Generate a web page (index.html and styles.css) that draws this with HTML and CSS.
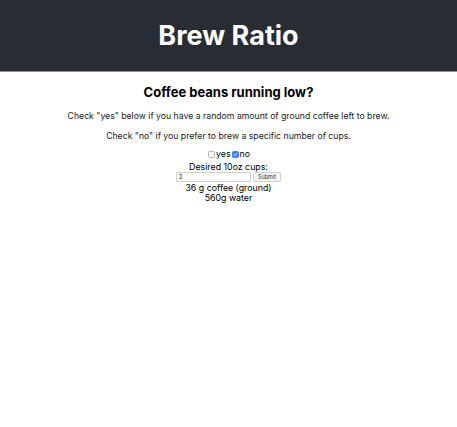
FILE: index.html
```html
<!DOCTYPE html>
<html>
<head>
<meta charset="utf-8">
<link rel="stylesheet" href="styles.css">
</head>
<body>
<div class="app">
  <header class="app-header">
    <h1 class="title">Brew Ratio</h1>
  </header>
  <main class="content">
    <h2 class="question">Coffee beans running low?</h2>
    <p class="note">Check "yes" below if you have a random amount of ground coffee left to brew.</p>
    <p class="note">Check "no" if you prefer to brew a specific number of cups.</p>
    <div class="choices">
      <label class="choice"><input type="checkbox" class="box">yes</label>
      <label class="choice"><input type="checkbox" class="box" checked>no</label>
    </div>
    <div class="line label">Desired 10oz cups:</div>
    <form class="cups-form">
      <input type="text" class="cups-input" value="2">
      <button type="button" class="submit">Submit</button>
    </form>
    <div class="line">36 g coffee (ground)</div>
    <div class="line">560g water</div>
  </main>
</div>
</body>
</html>
```
FILE: styles.css
```css
html, body {
  margin: 0;
  padding: 0;
  background: #ffffff;
}
body {
  font-family: Inter, "Noto Sans", sans-serif;
  color: #000;
}
.app {
  text-align: center;
}
.app-header {
  background: #282c34;
  height: 71px;
  border-bottom: 1px solid #8a8d92;
  display: flex;
  align-items: center;
  justify-content: center;
}
.title {
  margin: 0;
  color: #ffffff;
  font-size: 27px;
  font-weight: 700;
}
.content {
  display: flex;
  flex-direction: column;
  align-items: center;
}
.question {
  margin: 12px 0 2px;
  font-size: 13px;
  font-weight: 700;
  line-height: 16px;
}
.note {
  margin: 9px 0 0;
  font-size: 8.7px;
  line-height: 11px;
  color: #222;
}
.choices {
  margin-top: 7px;
  display: flex;
  font-size: 8.8px;
  line-height: 10px;
}
.choice {
  display: flex;
  align-items: center;
}
.box {
  -webkit-appearance: none;
  appearance: none;
  margin: 0 1px 0 1px;
  width: 7px;
  height: 7px;
  box-sizing: border-box;
  border: 1px solid #b5b5b5;
  border-radius: 1.5px;
  background: #fff;
}
.box:checked {
  border-color: #3c82f6;
  background: #3c82f6 url("data:image/svg+xml,%3Csvg xmlns='http://www.w3.org/2000/svg' viewBox='0 0 10 10'%3E%3Cpath d='M2.2 5.2 L4.2 7.2 L7.8 2.8' fill='none' stroke='white' stroke-width='1.6' stroke-linecap='round' stroke-linejoin='round'/%3E%3C/svg%3E") center / 100% 100% no-repeat;
}
.line {
  font-size: 8.8px;
  line-height: 10px;
}
.label {
  margin-top: 1.5px;
  line-height: 11px;
}
.cups-form {
  display: flex;
  align-items: center;
  gap: 2px;
  margin: 0;
  height: 11px;
}
.cups-input {
  width: 69px;
  height: 8px;
  font-size: 5.5px;
  padding: 0 2px;
  border: 1px solid #d0d0d0;
  font-family: inherit;
}
.submit {
  font-size: 5.5px;
  height: 10px;
  padding: 0 4px;
  border: 1px solid #d0d0d0;
  background: #f6f6f6;
  border-radius: 2px;
  font-family: inherit;
  color: #333;
}
```
